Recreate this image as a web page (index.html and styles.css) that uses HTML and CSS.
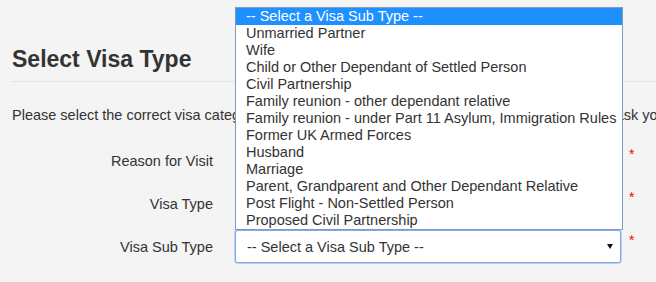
FILE: index.html
```html
<!DOCTYPE html>
<html lang="en">
<head>
<meta charset="utf-8">
<title>Select Visa Type</title>
<link rel="stylesheet" href="styles.css">
</head>
<body>
<div class="page">
  <h2 class="title">Select Visa Type</h2>
  <hr class="rule">
  <p class="intro">Please select the correct visa category for your visit. Based upon your selections, we will then ask you some further questions.</p>
  <div class="form">
    <div class="row">
      <label class="label">Reason for Visit</label>
      <div class="field"></div>
      <span class="req">*</span>
    </div>
    <div class="row">
      <label class="label">Visa Type</label>
      <div class="field"></div>
      <span class="req">*</span>
    </div>
    <div class="row">
      <label class="label">Visa Sub Type</label>
      <div class="field">
        <div class="select">
          <span class="select-text">-- Select a Visa Sub Type --</span>
          <span class="arrow"></span>
        </div>
      </div>
      <span class="req">*</span>
    </div>
  </div>
</div>
<ul class="listbox">
  <li class="opt selected">-- Select a Visa Sub Type --</li>
  <li class="opt">Unmarried Partner</li>
  <li class="opt">Wife</li>
  <li class="opt">Child or Other Dependant of Settled Person</li>
  <li class="opt">Civil Partnership</li>
  <li class="opt">Family reunion - other dependant relative</li>
  <li class="opt">Family reunion - under Part 11 Asylum, Immigration Rules</li>
  <li class="opt">Former UK Armed Forces</li>
  <li class="opt">Husband</li>
  <li class="opt">Marriage</li>
  <li class="opt">Parent, Grandparent and Other Dependant Relative</li>
  <li class="opt">Post Flight - Non-Settled Person</li>
  <li class="opt">Proposed Civil Partnership</li>
</ul>
</body>
</html>
```
FILE: styles.css
```css
html, body {
  margin: 0;
  padding: 0;
  background: #f4f4f4;
  overflow: hidden;
}
body {
  font-family: "Liberation Sans", Arial, sans-serif;
  font-size: 14.5px;
  color: #333;
  width: 656px;
  height: 282px;
  position: relative;
}
.page {
  padding: 46px 0 0 11px;
}
.title {
  margin: 0 0 0 1px;
  font-size: 23px;
  line-height: 26px;
  font-weight: bold;
  color: #333;
}
.rule {
  margin: 9px 0 0 0;
  border: 0;
  border-top: 1px solid #e3e3e3;
  height: 0;
}
.intro {
  margin: 23px 0 0 1px;
  line-height: 20px;
  white-space: nowrap;
  overflow: hidden;
}
.form {
  margin-top: 19px;
  display: flex;
  flex-direction: column;
  gap: 10px;
}
.row {
  display: flex;
  align-items: center;
  height: 33px;
}
.label {
  width: 202px;
  text-align: right;
  line-height: 20px;
}
.field {
  margin-left: 22px;
  width: 386px;
  height: 33px;
}
.req {
  margin-left: 8px;
  color: #f00;
  font-size: 14px;
  line-height: 20px;
  align-self: flex-start;
  margin-top: 0;
}
.select {
  box-sizing: border-box;
  height: 33px;
  background: #fff;
  border: 1px solid #7fabea;
  border-radius: 3px;
  box-shadow: 0 0 0 1px rgba(140, 180, 240, 0.55);
  display: flex;
  align-items: center;
  padding: 0 7px 0 11px;
}
.select-text {
  flex: 1;
  line-height: 20px;
}
.arrow {
  width: 0;
  height: 0;
  border-left: 3px solid transparent;
  border-right: 3px solid transparent;
  border-top: 5px solid #111;
}
.listbox {
  position: absolute;
  left: 235px;
  top: 7px;
  width: 386px;
  margin: 0;
  padding: 0;
  list-style: none;
  background: #fff;
  border: 1px solid #7f9cbd;
}
.opt {
  height: 17px;
  line-height: 17px;
  padding-left: 10px;
  white-space: nowrap;
  color: #333;
}
.opt.selected {
  background: #1e90ff;
  color: #fff;
}
```
